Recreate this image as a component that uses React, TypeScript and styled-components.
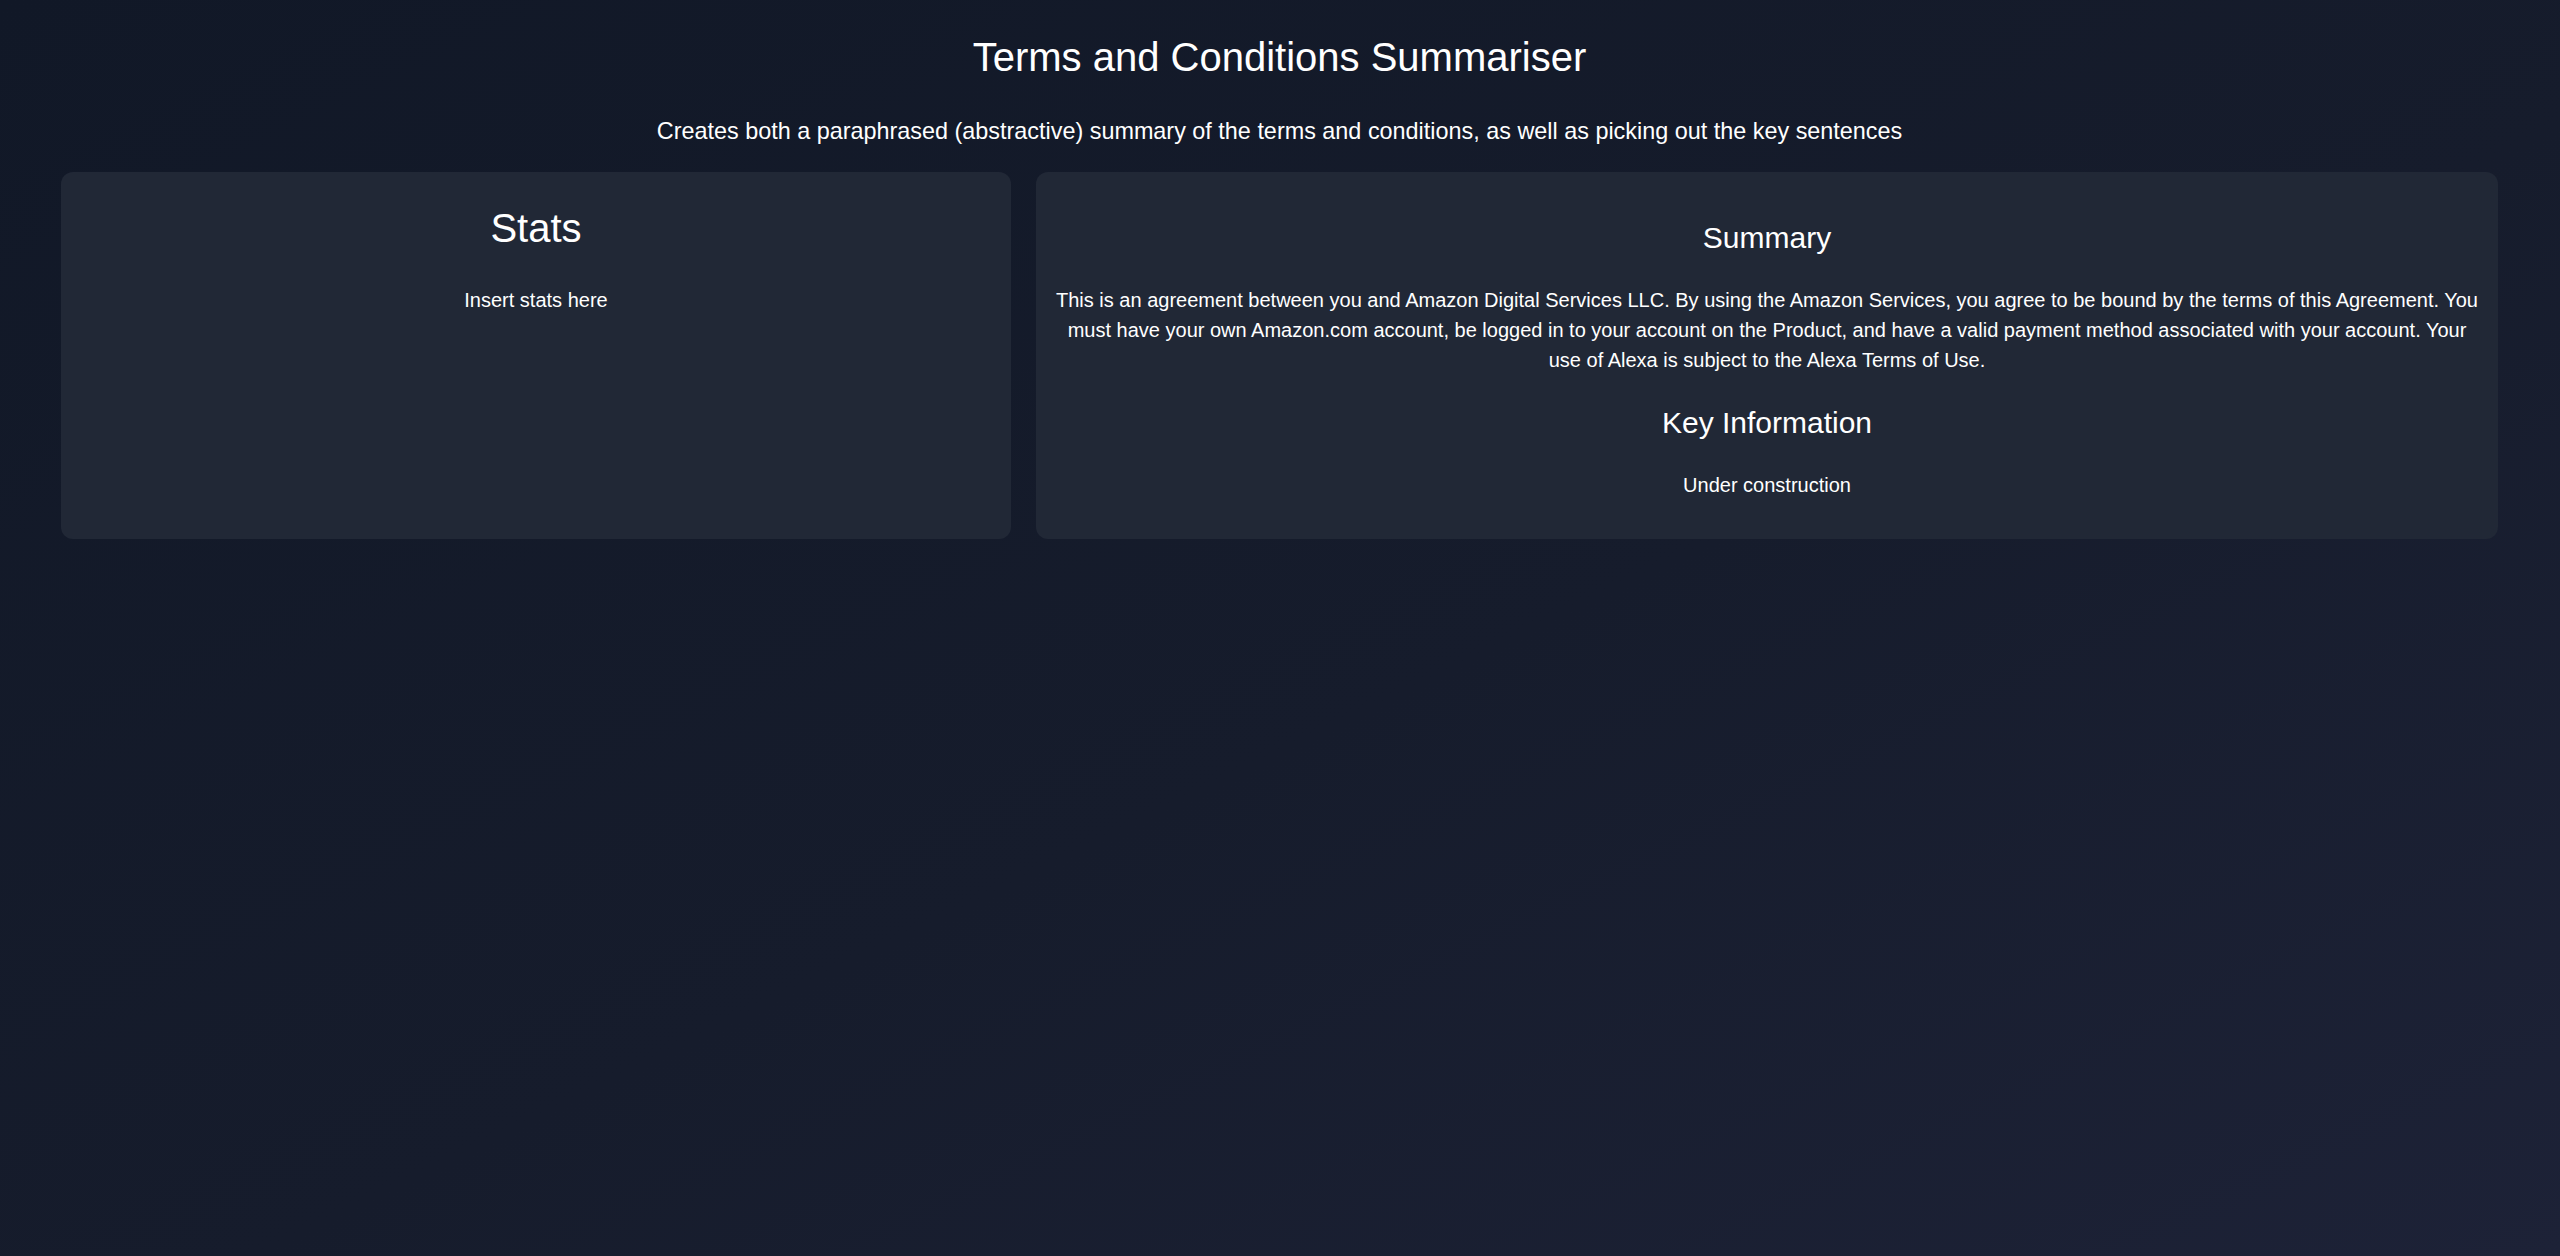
import React from "react";
import styled, { createGlobalStyle } from "styled-components";

const GlobalStyle = createGlobalStyle`
  html, body {
    margin: 0;
    padding: 0;
  }
  body {
    min-height: 100vh;
    background: linear-gradient(to bottom right, #111827 0%, #161c2c 55%, #1d2237 100%);
    font-family: "Liberation Sans", Arial, sans-serif;
    color: #ffffff;
  }
  #root {
    min-height: 100vh;
  }
`;

const Page = styled.main`
  box-sizing: border-box;
  min-height: 100vh;
  padding: 33px 62px 0 61px;
  display: flex;
  flex-direction: column;
`;

const Header = styled.header`
  display: flex;
  flex-direction: column;
  align-items: center;
  text-align: center;
  gap: 36px;
  margin-bottom: 27px;
`;

const Title = styled.h1`
  margin: 0;
  font-size: 40px;
  line-height: 48px;
  font-weight: 400;
`;

const Subtitle = styled.p`
  margin: 0;
  font-size: 23.4px;
  line-height: 28px;
  font-weight: 400;
`;

const Grid = styled.div`
  display: grid;
  grid-template-columns: 950fr 1462fr;
  gap: 25px;
  align-items: stretch;
`;

const Card = styled.section<{ $padTop: number; $padBottom: number; $gap: number }>`
  box-sizing: border-box;
  background: #212836;
  border-radius: 12px;
  padding: ${(p) => p.$padTop}px 16px ${(p) => p.$padBottom}px;
  display: flex;
  flex-direction: column;
  align-items: center;
  text-align: center;
  gap: ${(p) => p.$gap}px;
`;

const CardTitle = styled.h2`
  margin: 0;
  font-size: 40px;
  line-height: 48px;
  font-weight: 400;
`;

const SectionTitle = styled.h3`
  margin: 0;
  font-size: 30px;
  line-height: 36px;
  font-weight: 400;
`;

const Body = styled.p`
  margin: 0;
  font-size: 20px;
  line-height: 30px;
`;

export default function App() {
  return (
    <>
      <GlobalStyle />
      <Page>
        <Header>
          <Title>Terms and Conditions Summariser</Title>
          <Subtitle>
            Creates both a paraphrased (abstractive) summary of the terms and conditions, as well as
            picking out the key sentences
          </Subtitle>
        </Header>
        <Grid>
          <Card $padTop={32} $padBottom={32} $gap={33}>
            <CardTitle>Stats</CardTitle>
            <Body>Insert stats here</Body>
          </Card>
          <Card $padTop={48} $padBottom={39} $gap={29.4}>
            <SectionTitle>Summary</SectionTitle>
            <Body>
              This is an agreement between you and Amazon Digital Services LLC. By using the Amazon
              Services, you agree to be bound by the terms of this Agreement. You must have your own
              Amazon.com account, be logged in to your account on the Product, and have a valid
              payment method associated with your account. Your use of Alexa is subject to the Alexa
              Terms of Use.
            </Body>
            <SectionTitle>Key Information</SectionTitle>
            <Body>Under construction</Body>
          </Card>
        </Grid>
      </Page>
    </>
  );
}
